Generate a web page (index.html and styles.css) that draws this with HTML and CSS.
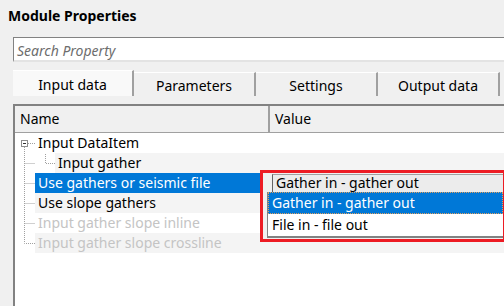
FILE: index.html
```html
<!DOCTYPE html>
<html>

<head>
  <meta charset="utf-8">
  <title>Module Properties</title>
  <link rel="stylesheet" href="styles.css">
</head>

<body>
  <h1 class="title">Module Properties</h1>
  <div class="search"><span class="placeholder">Search Property</span></div>

  <div class="tabs">
    <div class="tab active">Input data</div>
    <div class="tab">Parameters</div>
    <div class="tab">Settings</div>
    <div class="tab">Output data</div>
  </div>

  <div class="grid">
    <div class="head">
      <div class="col-name">Name</div>
      <div class="col-value">Value</div>
    </div>
    <div class="body">
      <svg class="lines" width="60" height="130" viewBox="0 0 60 130">
        <g stroke="#a0a0a0" stroke-width="1" stroke-dasharray="1 1" fill="none">
          <path d="M9.5 14 V110.5 H20" />
          <path d="M9.5 30.5 H20" />
          <path d="M9.5 50.5 H20" />
          <path d="M9.5 70.5 H20" />
          <path d="M9.5 90.5 H20" />
          <path d="M30.5 21 V30.5 H40" />
          <path d="M13 10.5 H20" />
        </g>
        <rect x="6.5" y="7.5" width="6" height="6" fill="#fff" stroke="#8c8c8c" />
        <path d="M8 10.5 H11" stroke="#333" />
      </svg>
      <div class="row">
        <div class="cell lvl1">Input DataItem</div>
      </div>
      <div class="row alt lvl2-bg">
        <div class="cell lvl2">Input gather</div>
      </div>
      <div class="row">
        <div class="cell lvl1 selected">Use gathers or seismic file</div>
      </div>
      <div class="row alt">
        <div class="cell lvl1">Use slope gathers</div>
      </div>
      <div class="row">
        <div class="cell lvl1 disabled">Input gather slope inline</div>
      </div>
      <div class="row alt">
        <div class="cell lvl1 disabled">Input gather slope crossline</div>
      </div>
    </div>
  </div>

  <div class="dropdown">
    <div class="combo">Gather in - gather out</div>
    <div class="list">
      <div class="item selected">Gather in - gather out</div>
      <div class="item">File in - file out</div>
    </div>
  </div>
</body>

</html>
```

FILE: styles.css
```css
* {
  box-sizing: border-box;
}

body {
  margin: 0;
  width: 504px;
  height: 306px;
  overflow: hidden;
  background: #f0f0f0;
  font-family: "Noto Sans", "Open Sans", sans-serif;
  font-size: 14px;
  color: #000;
  position: relative;
}

.title {
  margin: 0;
  padding: 6px 0 0 8px;
  height: 37px;
  font-size: 14px;
  font-weight: bold;
}

.search {
  margin-left: 13px;
  height: 25px;
  background: #fff;
  border-top: 1px solid #828282;
  border-left: 1px solid #828282;
  border-bottom: 2px solid #e3e3e3;
  padding: 3px 0 0 3px;
}

.placeholder {
  color: #6d6d6d;
  font-style: italic;
}

.tabs {
  display: flex;
  margin: 8px 0 0 13px;
  height: 26px;
}

.tab {
  width: 122px;
  text-align: center;
  padding-top: 3px;
  border-right: 2px solid #a0a0a0;
  border-top: 1px solid #fff;
  margin-top: 2px;
}

.tab.active {
  background: #f9f9f9;
  margin-top: 0;
  padding-top: 4px;
  width: 121px;
}

.grid {
  margin: 8px 0 0 13px;
  height: 210px;
  background: #fff;
  border-left: 2px solid #828282;
  border-top: 2px solid #828282;
}

.head {
  display: flex;
  height: 27px;
  background: #f0f0f0;
  border-bottom: 1px solid #a0a0a0;
}

.col-name {
  width: 255px;
  padding: 3px 0 0 5px;
  border-right: 2px solid #a0a0a0;
}

.col-value {
  padding: 3px 0 0 5px;
}

.body {
  position: relative;
}

.lines {
  position: absolute;
  left: 0;
  top: 0;
}

.row {
  height: 20px;
  line-height: 20px;
  padding-left: 20px;
}

.row.alt {
  background: linear-gradient(#f4f4f4, #f4f4f4) no-repeat 20px 0 / 100% 100%;
}

.row.lvl2-bg {
  background: linear-gradient(#f4f4f4, #f4f4f4) no-repeat 40px 0 / 100% 100%;
}

.cell {
  width: 235px;
  height: 20px;
  padding-left: 3px;
}

.cell.lvl2 {
  padding-left: 23px;
}

.cell.selected {
  background: #0078d7;
  color: #fff;
}

.cell.disabled {
  color: #c4c4c4;
}

.dropdown {
  position: absolute;
  left: 260px;
  top: 170px;
  width: 246px;
  height: 72px;
  border: 3px solid #ed1c24;
  background: #f0f0f0;
}

.combo {
  margin: 1px 0 0 9px;
  height: 18px;
  line-height: 16px;
  background: #ececec;
  border-top: 1px solid #a0a0a0;
  border-left: 1px solid #646464;
  padding-left: 3px;
}

.list {
  margin-left: 4px;
  height: 46px;
  background: #fff;
  border-left: 1px solid #828282;
  border-bottom: 2px solid #828282;
}

.item {
  height: 22px;
  line-height: 21px;
  padding-left: 4px;
}

.item.selected {
  background: #0078d7;
  color: #fff;
  outline: 1px dotted #e0a060;
  outline-offset: -1px;
}
```
